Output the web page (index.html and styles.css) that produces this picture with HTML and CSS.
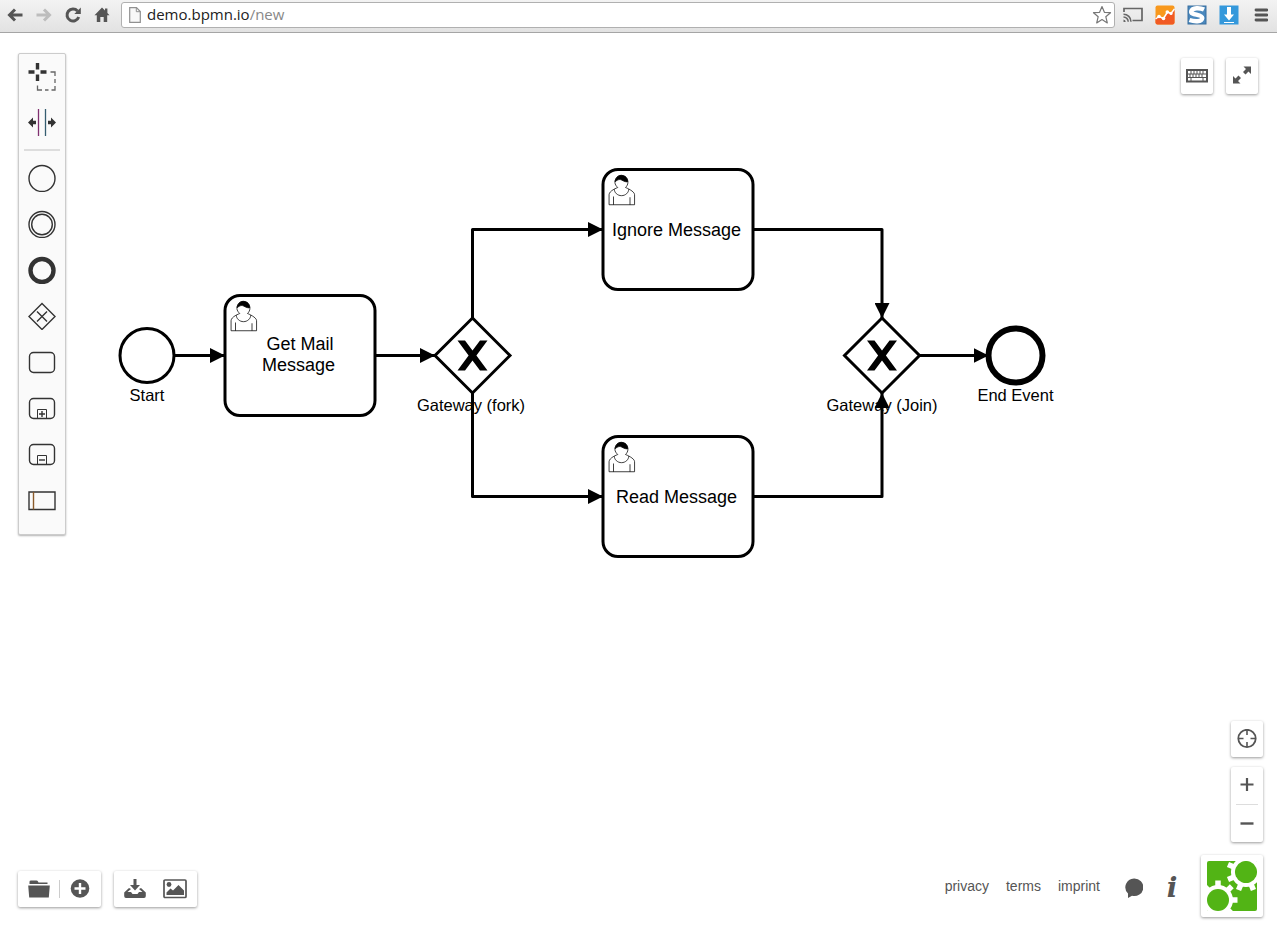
FILE: index.html
```html
<!DOCTYPE html>
<html lang="en">
<head>
<meta charset="utf-8">
<title>bpmn.io modeler</title>
<link rel="stylesheet" href="styles.css">
</head>
<body>
<header class="toolbar">
  <nav class="nav-buttons" aria-label="Browser navigation">
    <button class="tool" aria-label="Back"><svg width="18" height="18" viewBox="0 0 18 18"><path d="M16.5 9H4M9 3.500L3.500 9L9 14.500" fill="none" stroke="#555" stroke-width="3"/></svg></button>
    <button class="tool" aria-label="Forward"><svg width="18" height="18" viewBox="0 0 18 18"><path d="M1.500 9H14M9 3.500L14.500 9L9 14.500" fill="none" stroke="#bdbdbd" stroke-width="3"/></svg></button>
    <button class="tool" aria-label="Reload"><svg width="18" height="18" viewBox="0 0 18 18"><path d="M13.500 5A6 6 0 1 0 14.700 11" fill="none" stroke="#555" stroke-width="3"/><path d="M16.800 1.500V8H10.300Z" fill="#555"/></svg></button>
    <button class="tool" aria-label="Home"><svg width="18" height="18" viewBox="0 0 18 18"><path d="M9 1.500L1.500 9.200H3.800V16H7.300V11H10.700V16H14.200V9.200H16.500L14.400 7V2.500H12V4.600Z" fill="#555"/></svg></button>
  </nav>
  <div class="address">
    <svg width="12" height="16" viewBox="0 0 12 16"><path d="M.7.7H7.500L11.300 4.500V15.300H.7Z" fill="#f8f8f8" stroke="#909090" stroke-width="1.200"/><path d="M7.300.7V4.700H11.300" fill="none" stroke="#909090"/></svg>
    <div class="url" role="textbox" contenteditable="true" spellcheck="false" aria-label="Address">demo.bpmn.io<span class="url-path">/new</span></div>
    <button class="star" aria-label="Bookmark"><svg width="20" height="20" viewBox="0 0 20 20"><path d="M10 1.500L12.400 7.300L18.500 7.700L13.800 11.700L15.300 17.900L10 14.500L4.700 17.900L6.200 11.700L1.500 7.700L7.600 7.300Z" fill="#fff" stroke="#777" stroke-width="1.200" stroke-linejoin="round"/></svg></button>
  </div>
  <div class="extensions">
    <button class="ext" aria-label="Cast"><svg width="20" height="16" viewBox="0 0 20 16"><path d="M1 5V1.500H19V13.500H9.500" fill="none" stroke="#666" stroke-width="1.700"/><path d="M.5 7.200A7.500 7.500 0 0 1 8 14.700M.5 10A4.700 4.700 0 0 1 5.200 14.700" fill="none" stroke="#666" stroke-width="1.500"/><path d="M.5 12.500A2.500 2.500 0 0 1 2.700 14.900H.5Z" fill="#666"/></svg></button>
    <button class="ext" aria-label="Analytics"><svg width="20" height="20" viewBox="0 0 20 20"><rect x=".5" y=".5" width="19" height="19" rx="2" fill="#f8981d"/><path d="M.5 13L4 11.500L8.500 13.500L12.500 7.500L16.500 8L19.500 4V17.500Q19.500 19.500 17.500 19.500H2.500Q.5 19.500 .5 17.500Z" fill="#f15a24"/><path d="M.5 14L4 11.500L8.500 13.500L12.500 7L16 8.500L19.500 4" fill="none" stroke="#fff" stroke-width="1.500"/><g fill="#fff"><circle cx="4" cy="11.500" r="1.800"/><circle cx="8.500" cy="13.500" r="1.800"/><circle cx="12.300" cy="7" r="1.800"/><circle cx="16" cy="8.500" r="1.600"/></g></svg></button>
    <button class="ext" aria-label="Stylish"><svg width="20" height="20" viewBox="0 0 20 20"><rect x="1" y="1" width="18" height="18" fill="#4a88bd" stroke="#386f9f"/><path d="M17 4.500C13 2.600 5.500 2.300 4.300 6.200C3.300 10.500 15 8.800 15.200 13C15 17.300 7 16.700 2.500 15" fill="none" stroke="#fff" stroke-width="4.500"/></svg></button>
    <button class="ext" aria-label="Downloads"><svg width="20" height="20" viewBox="0 0 20 20"><rect x=".5" y=".5" width="19" height="19" fill="#3498db"/><path d="M8 2H12V9.500H15L10 15.500L5 9.500H8ZM5 17H15V18H5Z" fill="#fff"/></svg></button>
    <button class="ext" aria-label="Menu"><svg width="14" height="14" viewBox="0 0 14 14"><path d="M2 2H13M2 7H13M2 12H13" stroke="#555" stroke-width="2.800" stroke-linecap="round"/></svg></button>
  </div>
</header>

<main class="canvas">
  <svg class="diagram" viewBox="0 0 800 400" aria-label="Process diagram">
    <defs>
      <marker id="arrow" viewBox="0 0 10 10" refX="10" refY="5" markerWidth="10" markerHeight="10" markerUnits="userSpaceOnUse" orient="auto"><path d="M0 0L10 5L0 10Z"/></marker>
      <symbol id="task" viewBox="0 0 104 84">
        <rect x="2" y="2" width="100" height="80" rx="10" fill="#fff" stroke="#000" stroke-width="2"/>
        <g transform="translate(2 2)" fill="#fff" stroke="#000" stroke-width=".5">
          <path d="M15 12c.909-.845 1.594-2.049 1.594-3.385 0-2.554-1.805-4.622-4.357-4.622-2.552 0-4.288 2.068-4.288 4.622 0 1.348.974 2.562 1.896 3.405-.529.187-5.669 2.097-5.794 4.756v6.718h17v-6.718c0-2.298-5.528-4.595-6.051-4.776zm-8 6v5.500m11 0v-5"/>
          <path d="M17.162 13.009c0 2.447-2.158 4.431-4.821 4.431-2.665 0-4.822-1.981-4.822-4.431"/>
          <path fill="#000" d="M8.100 8.200s2.251-2.358 4.274-1.177c2.024 1.181 4.221 1.537 4.124.965-.098-.57-.117-3.791-4.191-4.136-3.572.001-4.208 3.670-4.207 4.348z"/>
        </g>
      </symbol>
      <symbol id="gateway" viewBox="-27 -27 54 54">
        <path d="M0-25L25 0L0 25L-25 0Z" fill="#fff" stroke="#000" stroke-width="2"/>
        <path d="M-10-10H-5L0-3.300L5-10H10L2.600 0L10 10H5L0 3.300L-5 10H-10L-2.600 0Z"/>
      </symbol>
    </defs>
    <g class="event-label">
      <text x="98" y="245">Start</text>
      <text x="314" y="252">Gateway (fork)</text>
      <text x="588" y="252">Gateway (Join)</text>
      <text x="677" y="245">End Event</text>
    </g>
    <g class="flow">
      <path d="M116 215H150"/>
      <path d="M250 215H290"/>
      <path d="M315 190V131H402"/>
      <path d="M315 240V309H402"/>
      <path d="M502 131H588V190"/>
      <path d="M502 309H588V240"/>
      <path d="M613 215H659"/>
    </g>
    <circle cx="98" cy="215" r="18" fill="#fff" stroke="#000" stroke-width="2"/>
    <circle cx="677" cy="215" r="18" fill="#fff" stroke="#000" stroke-width="4"/>
    <use href="#task" x="148" y="173" width="104" height="84"/>
    <use href="#task" x="400" y="89" width="104" height="84"/>
    <use href="#task" x="400" y="267" width="104" height="84"/>
    <use href="#gateway" x="288" y="188" width="54" height="54"/>
    <use href="#gateway" x="561" y="188" width="54" height="54"/>
    <g class="task-label">
      <text x="200" y="211">Get Mail</text>
      <text x="199" y="225">Message</text>
      <text x="451" y="135">Ignore Message</text>
      <text x="451" y="313">Read Message</text>
    </g>
  </svg>

  <div class="palette" role="toolbar" aria-label="Elements">
    <button class="entry" aria-label="Lasso tool"><svg width="28" height="28" viewBox="0 0 28 28"><path d="M9.500 0V6.500M9.500 11.500V18M.5 9H6.500M12.500 9H18.500" stroke="#333" stroke-width="3.400"/><path d="M22.500 9H27V13M27 16V20M27 23V27H23.500M20.500 27H17M14 27H9.500V22.500" fill="none" stroke="#666" stroke-width="1.300"/></svg></button>
    <button class="entry" aria-label="Space tool"><svg width="28" height="28" viewBox="0 0 28 28"><path d="M10.500 0V27" stroke="#803070" stroke-width="1.300"/><path d="M17.500 0V27" stroke="#355d70" stroke-width="1.300"/><path d="M0 13.500L5 8.500V11.700H8V15.300H5V18.500ZM28 13.500L23 8.500V11.700H20V15.300H23V18.500Z" fill="#333"/></svg></button>
    <hr class="separator">
    <button class="entry" aria-label="Start event"><svg width="28" height="28" viewBox="0 0 28 28"><circle cx="14" cy="14.500" r="13"/></svg></button>
    <button class="entry" aria-label="Intermediate event"><svg width="28" height="28" viewBox="0 0 28 28"><circle cx="14" cy="14.500" r="13"/><circle cx="14" cy="14.500" r="10.300"/></svg></button>
    <button class="entry" aria-label="End event"><svg width="28" height="28" viewBox="0 0 28 28"><circle cx="14" cy="14.500" r="11.500" stroke-width="4.400"/></svg></button>
    <button class="entry" aria-label="Gateway"><svg width="28" height="28" viewBox="0 0 28 28"><path d="M14 1.500L27 14.500L14 27.500L1 14.500ZM9 9.500L19 19.500M19 9.500L9 19.500"/></svg></button>
    <button class="entry" aria-label="Task"><svg width="28" height="28" viewBox="0 0 28 28"><rect x="1.500" y="4.500" width="25" height="20" rx="4"/></svg></button>
    <button class="entry" aria-label="Expanded sub process"><svg width="28" height="28" viewBox="0 0 28 28"><rect x="1.500" y="4.500" width="25" height="20" rx="4"/><path d="M9.500 24.500V15.500H18.500V24.500" stroke-width="1"/><path d="M11 20H17M14 17V23"/></svg></button>
    <button class="entry" aria-label="Collapsed sub process"><svg width="28" height="28" viewBox="0 0 28 28"><rect x="1.500" y="4.500" width="25" height="20" rx="4"/><path d="M9.500 24.500V15.500H18.500V24.500" stroke-width="1"/><path d="M11 20H17"/></svg></button>
    <button class="entry" aria-label="Pool"><svg width="28" height="28" viewBox="0 0 28 28"><path d="M1 6H27V23.500H1Z"/><path d="M5.500 6V23.500" stroke="#8a5a2a"/></svg></button>
  </div>

  <div class="corner top-right">
    <button class="card icon-button" aria-label="Keyboard shortcuts"><svg width="22" height="14" viewBox="0 0 22 14"><path d="M1 1H21V12.500H1Z" fill="#fff" stroke="#555" stroke-width="2"/><path d="M2 5H20M2 8.500H20M5 2V5M8 2V5M11 2V5M14 2V5M17 2V5M4 5V8.500M7 5V8.500M10 5V8.500M13 5V8.500M16 5V8.500M5 8.500V12M17 8.500V12" stroke="#555"/></svg></button>
    <button class="card icon-button" aria-label="Fullscreen"><svg width="20" height="20" viewBox="0 0 20 20"><path d="M11.500 .5H19V8L16.500 5.500L13.500 8.500L11 6L14 3ZM8.500 17.500H1V10L3.500 12.500L6.500 9.500L9 12L6 15Z" fill="#555"/></svg></button>
  </div>

  <div class="corner bottom-left">
    <div class="card group">
      <button class="icon-button wide" aria-label="Open diagram"><svg width="22" height="18" viewBox="0 0 22 18"><path d="M1.500 4V1.800Q1.500.5 3 .5H8.500Q9.500.5 10 1.500L10.500 2.500H19.500V4ZM.2 5.500H21.800L20.800 17.500H1.200Z" fill="#555"/></svg></button>
      <span class="divider"></span>
      <button class="icon-button wide" aria-label="New diagram"><svg width="20" height="20" viewBox="0 0 20 20"><circle cx="10" cy="9.500" r="9.300" fill="#555"/><path d="M10 4V15M4.500 9.500H15.500" stroke="#fff" stroke-width="2.400"/></svg></button>
    </div>
    <div class="card group">
      <button class="icon-button wide" aria-label="Download diagram"><svg width="22" height="20" viewBox="0 0 22 20"><path d="M9.500 0H12.500V6H16L11 11.500L6 6H9.500ZM5 9L7 10L3.500 13H7L8.500 15H13.500L15 13H18.500L15 10L17 9L21.800 13.500V17Q21.800 19 20 19H2Q.2 19 .2 17V13.500Z" fill="#555"/></svg></button>
      <button class="icon-button wide" aria-label="Download image"><svg width="24" height="20" viewBox="0 0 24 20"><rect x="1" y="1" width="22" height="17.500" rx="1" fill="none" stroke="#555" stroke-width="1.700"/><circle cx="6" cy="5.500" r="2.400" fill="#555"/><path d="M3.500 16V13.500L7.500 9.500L10 11.500L15.500 6L21 11.500V16Z" fill="#555"/></svg></button>
    </div>
  </div>

  <div class="corner bottom-right">
    <button class="card icon-button" aria-label="Reset zoom"><svg width="20" height="20" viewBox="0 0 20 20"><circle cx="10" cy="9.500" r="8.700" fill="none" stroke="#555" stroke-width="1.800"/><path d="M10 1V6M10 13V18M1 9.500H6.500M13.500 9.500H19" stroke="#555" stroke-width="1.600"/></svg></button>
    <div class="card zoom">
      <button class="icon-button" aria-label="Zoom in"><svg width="14" height="14" viewBox="0 0 14 14"><path d="M7 0V13M.5 6.500H13.500" stroke="#555" stroke-width="2.200"/></svg></button>
      <hr class="zoom-line">
      <button class="icon-button" aria-label="Zoom out"><svg width="14" height="14" viewBox="0 0 14 14"><path d="M.5 6.500H13.500" stroke="#555" stroke-width="2.400"/></svg></button>
    </div>
    <footer class="footer">
      <a href="#privacy">privacy</a>
      <a href="#terms">terms</a>
      <a href="#imprint">imprint</a>
      <button class="plain comment" aria-label="Feedback"><svg width="18" height="20" viewBox="0 0 18 20"><path d="M9 .5A9 8.800 0 1 1 7 17.800L3 20V15.500A9 8.800 0 0 1 9 .5Z" fill="#555"/></svg></button>
      <button class="plain info" aria-label="About">i</button>
      <a class="card logo" href="#home" aria-label="bpmn.io"><svg width="50" height="50" viewBox="0 0 50 50">
        <defs><g id="cog"><circle r="15" fill="#fff"/><path d="M0 0H19.500M0 0L13.800-13.800M0 0V-19.500M0 0L-13.800-13.800M0 0L13.800 13.800" stroke="#fff" stroke-width="5.500"/><circle r="11" fill="#52b415"/></g></defs>
        <rect width="50" height="50" rx="2" fill="#52b415"/>
        <use href="#cog" transform="translate(11 39)"/>
        <use href="#cog" transform="translate(39 11) rotate(157.500)"/>
      </svg></a>
    </footer>
  </div>
</main>
</body>
</html>
```
FILE: styles.css
```css
* { box-sizing: border-box; }

body {
  margin: 0;
  min-height: 100vh;
  display: flex;
  flex-direction: column;
  background: #fff;
  font: 14px/20px "Liberation Sans", Arial, sans-serif;
  color: #555;
}

button {
  padding: 0;
  border: 0;
  background: none;
  color: inherit;
  cursor: pointer;
}

svg { display: block; }

.toolbar {
  display: flex;
  padding: 2px 0 4px;
  background: linear-gradient(#f3f3f3, #e2e2e2);
  border-bottom: 1px solid #a5a5a5;
}

.nav-buttons, .extensions { display: flex; }

.tool, .ext {
  display: flex;
  align-items: center;
  justify-content: center;
  width: 29px;
}

.ext { width: 32px; }

.address {
  flex: 1;
  display: flex;
  align-items: center;
  gap: 6px;
  height: 26px;
  margin: 0 2px 0 5px;
  padding: 0 2px 0 7px;
  background: #fff;
  border: 1px solid #b0b0b0;
  border-radius: 3px;
}

.url {
  flex: 1;
  padding-bottom: 2px;
  font: 15px/20px "Open Sans", "Noto Sans", sans-serif;
  color: #222;
  outline: 0;
}

.url-path { color: #888; }

.canvas {
  position: relative;
  flex: 1;
  min-height: 600px;
  overflow: hidden;
}

.diagram {
  width: 1200px;
  height: 600px;
}

.flow path {
  fill: none;
  stroke: #000;
  stroke-width: 2px;
  stroke-linejoin: round;
  marker-end: url(#arrow);
}

.event-label, .task-label {
  font-size: 11px;
  text-anchor: middle;
  fill: #000;
}

.task-label { font-size: 12px; }

.palette {
  position: absolute;
  top: 20px;
  left: 18px;
  display: flex;
  flex-direction: column;
  width: 48px;
  padding-bottom: 11px;
  background: #fafafa;
  border: 1px solid #ccc;
  border-radius: 2px;
  box-shadow: 0 1px 2px rgba(0, 0, 0, 0.3);
}

.entry {
  display: flex;
  align-items: center;
  justify-content: center;
  height: 46px;
}

.entry svg {
  fill: none;
  stroke-width: 1.4px;
  stroke: #333;
}

.entry path[fill="#333"] { stroke: none; }

.separator {
  width: 36px;
  height: 2px;
  margin: 3px 5px 4px;
  border: 0;
  background: #ddd;
}

.corner {
  position: absolute;
  display: flex;
}

.card {
  background: #fff;
  border-radius: 2px;
  box-shadow: 0 1px 3px rgba(0, 0, 0, 0.4);
}

.icon-button {
  display: flex;
  align-items: center;
  justify-content: center;
  width: 32px;
  height: 36px;
}

.top-right {
  top: 25px;
  right: 19px;
  gap: 13px;
}

.bottom-left {
  left: 18px;
  bottom: 24px;
  gap: 13px;
}

.group {
  display: flex;
  align-items: center;
  padding: 0 2px 0 1px;
}

.wide { width: 40px; }

.wide svg { flex: none; }

.divider {
  width: 1px;
  height: 18px;
  background: #ccc;
}

.group:first-child { padding-right: 1px; }

.bottom-right {
  right: 14px;
  bottom: 14px;
  flex-direction: column;
  align-items: flex-end;
  gap: 10px;
}

.zoom-line {
  height: 1px;
  margin: 1px 5px;
  border: 0;
  background: #ddd;
}

.footer {
  display: flex;
  align-items: center;
  gap: 17px;
  margin-top: 3px;
}

.footer a {
  color: #555;
  text-decoration: none;
}

.plain {
  display: flex;
  align-items: center;
  justify-content: center;
  padding-top: 3px;
}

.comment { margin-left: 8px; }

.info {
  width: 24px;
  font: italic bold 28px/32px "DejaVu Serif", serif;
}

.footer .logo {
  padding: 6px;
}
```
